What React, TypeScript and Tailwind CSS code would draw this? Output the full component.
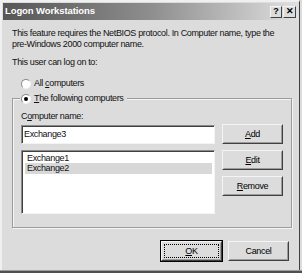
import React from "react";

const font = { fontFamily: "'Liberation Sans', Arial, sans-serif" };

function Label({ text, k }: { text: string; k?: number }) {
  if (k === undefined) return <>{text}</>;
  return (
    <>
      {text.slice(0, k)}
      <span className="underline">{text[k]}</span>
      {text.slice(k + 1)}
    </>
  );
}

function Btn({ label, k, focused }: { label: string; k?: number; focused?: boolean }) {
  return (
    <div
      className={`flex h-[20px] w-[61px] border border-t-[#f4f4f4] border-l-[#f4f4f4] border-r-[#404040] border-b-[#404040] bg-[#dcdcdc] text-black ${focused ? "outline outline-1 outline-black" : ""}`}
    >
      <div className="flex h-full w-full items-center justify-center border border-transparent border-r-[#9c9c9c] border-b-[#9c9c9c] p-[1px]">
        <span
          className={`flex h-full w-full items-center justify-center ${focused ? "border border-dotted border-black" : ""}`}
        >
          <span>
            <Label text={label} k={k} />
          </span>
        </span>
      </div>
    </div>
  );
}

function Radio({ checked }: { checked?: boolean }) {
  return (
    <span className="inline-flex h-[10px] w-[10px] items-center justify-center rounded-full border border-t-[#8a8a8a] border-l-[#8a8a8a] border-r-[#f4f4f4] border-b-[#f4f4f4] bg-white">
      {checked && <span className="h-[4px] w-[4px] rounded-full bg-black" />}
    </span>
  );
}

export default function App() {
  return (
    <div className="h-[273px] w-[302px] overflow-hidden bg-[#dcdcdc]" style={font}>
      <div className="flex h-[270px] w-[300px] flex-col border-l-2 border-t-2 border-r border-l-[#f0f0f0] border-t-[#f0f0f0] border-r-[#404040] pl-[1px] pt-[1px]">
        {/* title bar */}
        <div className="flex h-[17px] w-[295px] items-center justify-between bg-gradient-to-r from-[#565656] via-[#8e8e8e] to-[#e0e0e0] pl-[2px] pr-[2px]">
          <span className="text-[9.5px] font-bold tracking-[-0.1px] text-white">Logon Workstations</span>
          <div className="flex gap-[1px]">
            <div className="flex h-[12px] w-[12px] items-center justify-center border border-t-[#f4f4f4] border-l-[#f4f4f4] border-r-[#404040] border-b-[#404040] bg-[#dcdcdc] text-[9px] font-bold leading-none text-black">?</div>
            <div className="flex h-[12px] w-[13px] items-center justify-center border border-t-[#f4f4f4] border-l-[#f4f4f4] border-r-[#404040] border-b-[#404040] bg-[#dcdcdc] text-[9px] font-bold leading-none text-black">✕</div>
          </div>
        </div>

        <div className="flex flex-col px-[9px] text-[9px] leading-[11px] tracking-[-0.35px] text-[#111]">
          <p className="mt-[8px] whitespace-nowrap">
            This feature requires the NetBIOS protocol. In Computer name, type the
            <br />
            pre-Windows 2000 computer name.
          </p>
          <p className="mt-[7px]">This user can log on to:</p>

          <div className="ml-[9px] mt-[10px] flex h-[11px] items-center gap-[3px]">
            <Radio />
            <span>
              All <span className="underline">c</span>omputers
            </span>
          </div>

          {/* group box */}
          <div className="relative mt-[9px] h-[130px] w-[280px] border border-[#9c9c9c] shadow-[inset_1px_1px_0_#f4f4f4,1px_1px_0_#f4f4f4]">
            <div className="absolute -top-[6px] left-[7px] flex h-[11px] items-center gap-[3px] bg-[#dcdcdc] px-[1px]">
              <Radio checked />
              <span className="pr-[2px]">
                <span className="underline">T</span>he following computers
              </span>
            </div>

            <div className="flex flex-col px-[8px] pt-[12px]">
              <span>
                C<span className="underline">o</span>mputer name:
              </span>
              <div className="mt-[2px] flex items-start justify-between">
                <div className="mt-[1px] flex h-[19px] w-[194px] items-center border border-t-[#8a8a8a] border-l-[#8a8a8a] border-r-[#f4f4f4] border-b-[#f4f4f4] bg-white pl-[2px] shadow-[inset_1px_1px_0_#404040]">
                  Exchange3
                </div>
                <Btn label="Add" k={0} />
              </div>

              <div className="mt-[6px] flex items-start justify-between">
                <div className="flex h-[64px] w-[194px] flex-col border border-t-[#8a8a8a] border-l-[#8a8a8a] border-r-[#f4f4f4] border-b-[#f4f4f4] bg-white pl-[3px] pr-[2px] pt-[2px] shadow-[inset_1px_1px_0_#404040]">
                  <div className="h-[10px] pl-[2px] leading-[10px]">Exchange1</div>
                  <div className="h-[11px] bg-[#d8d8d8] pl-[2px] leading-[11px]">Exchange2</div>
                </div>
                <div className="flex flex-col gap-[6px]">
                  <Btn label="Edit" k={0} />
                  <Btn label="Remove" k={0} />
                </div>
              </div>
            </div>
          </div>

          <div className="mt-[13px] flex justify-end gap-[6px] pr-[1px]">
            <Btn label="OK" k={0} focused />
            <Btn label="Cancel" />
          </div>
        </div>
      </div>
      <div className="h-[3px] w-[302px] border-t border-t-[#9c9c9c] bg-[#505050]" />
    </div>
  );
}
